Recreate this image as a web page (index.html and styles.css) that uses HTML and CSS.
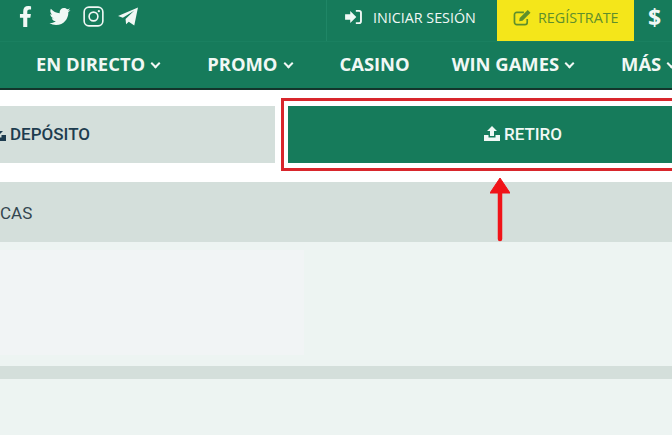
FILE: index.html
```html
<!DOCTYPE html>
<html lang="es">
<head>
    <meta charset="utf-8">
    <title>Retiro</title>
    <link rel="stylesheet" href="styles.css">
</head>
<body>
    <div class="topbar">
        <div class="social">
            <svg class="ico-fb" viewBox="0 0 320 512"><path d="M279 288l14-93h-89v-60c0-25 12-50 52-50h41V7s-37-7-72-7c-73 0-121 44-121 125v70H23v93h81v224h100V288z"/></svg>
            <svg class="ico-tw" viewBox="0 0 512 512"><path d="M459 152c.3 4 .3 8 .3 12 0 139-106 299-299 299-59 0-115-17-161-47 8 1 16 1 25 1 49 0 94-17 130-45-46-1-85-31-98-73 7 1 13 2 20 2 9 0 19-1 28-4C56 287 20 245 20 194v-1c14 8 30 13 47 13-28-19-47-51-47-87 0-20 5-37 14-53 52 64 129 105 216 110-2-8-3-16-3-24 0-58 47-105 105-105 30 0 58 13 77 33 24-5 47-14 67-26-8 25-25 45-46 58 21-2 42-8 60-16-14 21-32 39-51 53z"/></svg>
            <svg class="ico-ig" viewBox="0 0 22 22"><rect x="1.2" y="1.2" width="19.6" height="19.6" rx="5" fill="none" stroke="currentColor" stroke-width="1.7"/><circle cx="11" cy="11" r="4.6" fill="none" stroke="currentColor" stroke-width="1.7"/><circle cx="16.6" cy="5.4" r="1.2"/></svg>
            <svg class="ico-tg" viewBox="0 0 22 20"><path d="M21.5 .5L17.6 19.5 11.8 15.6 9 18.2 8.4 12.6 17.4 4 5.6 11.4 .5 9.4z"/></svg>
        </div>
        <div class="account">
            <a class="login">
                <svg class="ico-login" viewBox="0 0 18 15"><path d="M0 4.500h5.500V1L12 7.500 5.500 14V10.500H0z"/><path d="M11.500 1H15a2 2 0 0 1 2 2v9a2 2 0 0 1-2 2h-3.500" fill="none" stroke="currentColor" stroke-width="2"/></svg>
                INICIAR SESIÓN
            </a>
            <a class="register">
                <svg class="ico-edit" viewBox="0 0 20 18"><path d="M15 10.500V14a2.500 2.500 0 0 1-2.500 2.500H4A2.500 2.500 0 0 1 1.500 14V6A2.500 2.500 0 0 1 4 3.500h7.500" fill="none" stroke="currentColor" stroke-width="1.800"/><path d="M7 9.500L15.500 1l3 3L10 12.500l-3.500.5z"/></svg>
                REGÍSTRATE
            </a>
            <span class="dollar">$</span>
        </div>
    </div>

    <nav class="mainnav">
        <a>EN DIRECTO<span class="chev"></span></a>
        <a>PROMO<span class="chev"></span></a>
        <a>CASINO</a>
        <a>WIN GAMES<span class="chev"></span></a>
        <a>MÁS<span class="chev"></span></a>
    </nav>

    <div class="tabs">
        <div class="tab tab-deposit">
            <svg class="ico-down" viewBox="0 0 16 15"><path d="M6 0h4v5h3l-5 5-5-5h3z"/><path d="M0 9h4.500v2.500h7V9H16v6H0z"/></svg>
            DEPÓSITO
        </div>
        <div class="tab-frame">
            <div class="tab tab-withdraw">
                <svg class="ico-up" viewBox="0 0 16 15"><path d="M8 0l5 5H10v5H6V5H3z"/><path d="M0 9h4.500v2.500h7V9H16v6H0z"/></svg>
                RETIRO
            </div>
        </div>
    </div>

    <div class="panel-head">CAS</div>
    <div class="panel-body">
        <div class="panel-patch"></div>
    </div>
    <div class="panel-strip"></div>
    <div class="panel-rest"></div>

    <svg class="arrow" viewBox="0 0 20 64"><path d="M10 0L20 15H0z" fill="#f01318" stroke="#f01318" stroke-width="1" stroke-linejoin="round"/><path d="M10 12V61" stroke="#f01318" stroke-width="4.500" stroke-linecap="round"/></svg>
</body>
</html>
```

FILE: styles.css
```css
html, body {
    margin: 0;
    height: 435px;
    overflow: hidden;
    background: #fff;
    font-family: "Roboto", "Liberation Sans", sans-serif;
}

/* top bar */
.topbar {
    display: flex;
    justify-content: space-between;
    height: 41px;
    background: #167b5b;
    color: #f1f8f5;
    border-bottom: 1px solid #1a8060;
}
.social {
    display: flex;
    align-items: center;
    padding-left: 19px;
    height: 33px;
}
.social svg {
    fill: currentColor;
    display: block;
}
.ico-fb { width: 13px; height: 21px; margin-right: 17px; }
.ico-tw { width: 22px; height: 21px; margin-right: 12px; }
.ico-ig { width: 21px; height: 21px; margin-right: 13px; }
.ico-tg { width: 22px; height: 19px; }

.account {
    display: flex;
    width: 345px;
    border-left: 1px solid #1f8666;
}
.login {
    display: flex;
    align-items: center;
    width: 170px;
    padding: 0 0 7px 18px;
    box-sizing: border-box;
    font-family: "Open Sans", sans-serif;
    font-size: 14.3px;
}
.ico-login { width: 17px; height: 14px; margin-right: 11px; fill: currentColor; }
.register {
    display: flex;
    align-items: center;
    width: 137px;
    padding: 0 0 7px 16px;
    box-sizing: border-box;
    background: #f4e61a;
    color: #5f8f2c;
    font-family: "Open Sans", sans-serif;
    font-size: 14.3px;
}
.ico-edit { width: 19px; height: 17px; margin-right: 6px; fill: currentColor; }
.dollar {
    padding: 0 0 7px 14px;
    align-self: center;
    font-family: "Open Sans", sans-serif;
    font-weight: 700;
    font-size: 23px;
}

/* main nav */
.mainnav {
    display: flex;
    align-items: center;
    height: 43px;
    padding: 0 0 3px 36px;
    gap: 42px;
    overflow: hidden;
    background: #167b5b;
    border-bottom: 2px solid #12352b;
    color: #f1f8f5;
    font-family: "Open Sans", sans-serif;
    font-weight: 700;
    font-size: 18.4px;
    white-space: nowrap;
}
.chev {
    display: inline-block;
    width: 5px;
    height: 5px;
    margin: 0 6px 4px 7px;
    border-right: 2px solid currentColor;
    border-bottom: 2px solid currentColor;
    transform: rotate(45deg);
}

/* deposit / withdraw tabs */
.tabs {
    display: flex;
    align-items: center;
    height: 73px;
    margin-top: 8px;
}
.tab {
    display: flex;
    align-items: center;
    justify-content: center;
    height: 57px;
    box-sizing: border-box;
    padding-bottom: 2px;
    font-size: 17px;
    font-weight: 500;
}
.tab-deposit {
    flex: 0 0 275px;
    justify-content: flex-end;
    padding-right: 185px;
    overflow: hidden;
    background: #d4dfdb;
    color: #1d3c4f;
}
.ico-down { flex: none; width: 16px; height: 15px; margin: 0 4px 0 -10px; fill: #1d3c4f; }
/* the right end of this frame is cut off by the window */
.tab-frame {
    flex: 1;
    margin-left: 6px;
    padding: 5px 0 5px 4px;
    border: 3px solid #d8262c;
    border-right: 0;
    background: #fff;
}
.tab-withdraw {
    padding-left: 86px;
    background: #167b5b;
    color: #f1f8f5;
}
.ico-up { width: 16px; height: 15px; margin-right: 4px; fill: #f1f8f5; }

/* lower panels */
.panel-head {
    display: flex;
    align-items: center;
    height: 60px;
    margin-top: 11px;
    padding-top: 2px;
    box-sizing: border-box;
    overflow: hidden;
    background: #d4dfdb;
    color: #33454f;
    font-size: 17px;
}
.panel-body {
    height: 124px;
    padding-top: 8px;
    box-sizing: border-box;
    background: #edf4f2;
}
.panel-patch {
    width: 304px;
    height: 105px;
    background: #f1f4f5;
}
.panel-strip {
    height: 13px;
    background: #d4dfdb;
}
.panel-rest {
    height: 56px;
    background: #edf4f2;
}

/* annotation arrow over the page */
.arrow {
    position: absolute;
    left: 490px;
    top: 178px;
    width: 20px;
    height: 64px;
}
```
